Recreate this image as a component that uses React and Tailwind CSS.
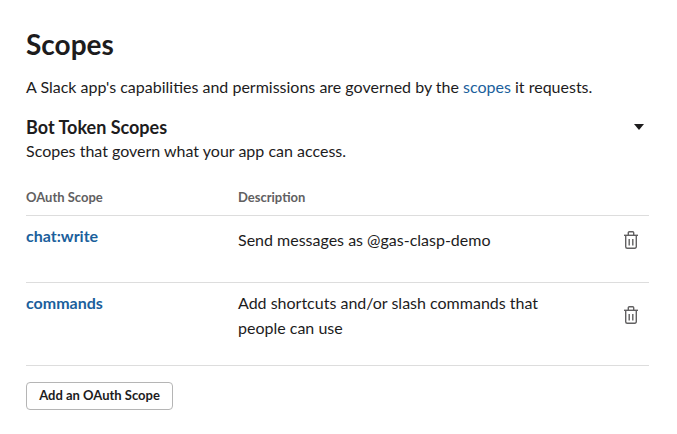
import React from "react";

function TrashIcon() {
  return (
    <svg width="14" height="18" viewBox="0 0 14 18" fill="none" stroke="#616061" strokeWidth="1.4">
      <path d="M0 4.3h14" />
      <path d="M1.7 4.3V15.8a1.5 1.5 0 0 0 1.5 1.5h7.6a1.5 1.5 0 0 0 1.5-1.5V4.3" />
      <path d="M4.3 4.3V1.8a1 1 0 0 1 1-1h3.4a1 1 0 0 1 1 1v2.5" />
      <path d="M5.2 8v6.5M8.8 8v6.5" />
    </svg>
  );
}

const scopes = [
  { name: "chat:write", description: "Send messages as @gas-clasp-demo", height: "h-[67px]", pad: "pt-[9px]", descPad: "pt-[11px]", iconPad: "pt-[15px]" },
  { name: "commands", description: "Add shortcuts and/or slash commands that people can use", height: "h-[83px]", pad: "pt-[9px]", descPad: "pt-[7px]", iconPad: "pt-[23px]" },
];

export default function App() {
  return (
    <div className="w-[677px] h-[434px] bg-white pl-[26px] pr-[28px] pt-[26px] font-['Lato',sans-serif] text-[#1d1c1d] overflow-hidden">
      <h1 className="text-[28px] leading-[36px] font-bold">Scopes</h1>
      <p className="mt-[14px] text-[16px] leading-[22px]">
        A Slack app's capabilities and permissions are governed by the{" "}
        <a className="text-[#1b5f9c]">scopes</a> it requests.
      </p>

      <div className="mt-[17px] flex justify-between">
        <h2 className="text-[18px] leading-[24px] font-bold">Bot Token Scopes</h2>
        <svg className="mt-[9px] mr-[5px]" width="10" height="6" viewBox="0 0 10 6" fill="#1d1c1d">
          <path d="M0 0h10L5 6z" />
        </svg>
      </div>
      <p className="mt-[1px] text-[16px] leading-[22px]">Scopes that govern what your app can access.</p>

      <div className="mt-[26px] flex h-[28px] border-b border-[#dddddd] text-[13px] leading-[18px] font-bold text-[#616061]">
        <div className="w-[212px]">OAuth Scope</div>
        <div>Description</div>
      </div>

      {scopes.map((scope) => (
        <div key={scope.name} className={`flex border-b border-[#dddddd] ${scope.height}`}>
          <div className={`w-[212px] text-[16px] leading-[22px] font-bold text-[#1b5f9c] ${scope.pad}`}>{scope.name}</div>
          <div className={`w-[330px] text-[16px] leading-[25px] ${scope.descPad}`}>{scope.description}</div>
          <div className={`ml-[56px] ${scope.iconPad}`}>
            <TrashIcon />
          </div>
        </div>
      ))}

      <button className="mt-[16px] h-[28px] w-[147px] rounded-[4px] border border-[#b5b5b5] bg-white text-[13px] font-bold text-[#1d1c1d]">
        Add an OAuth Scope
      </button>
    </div>
  );
}
